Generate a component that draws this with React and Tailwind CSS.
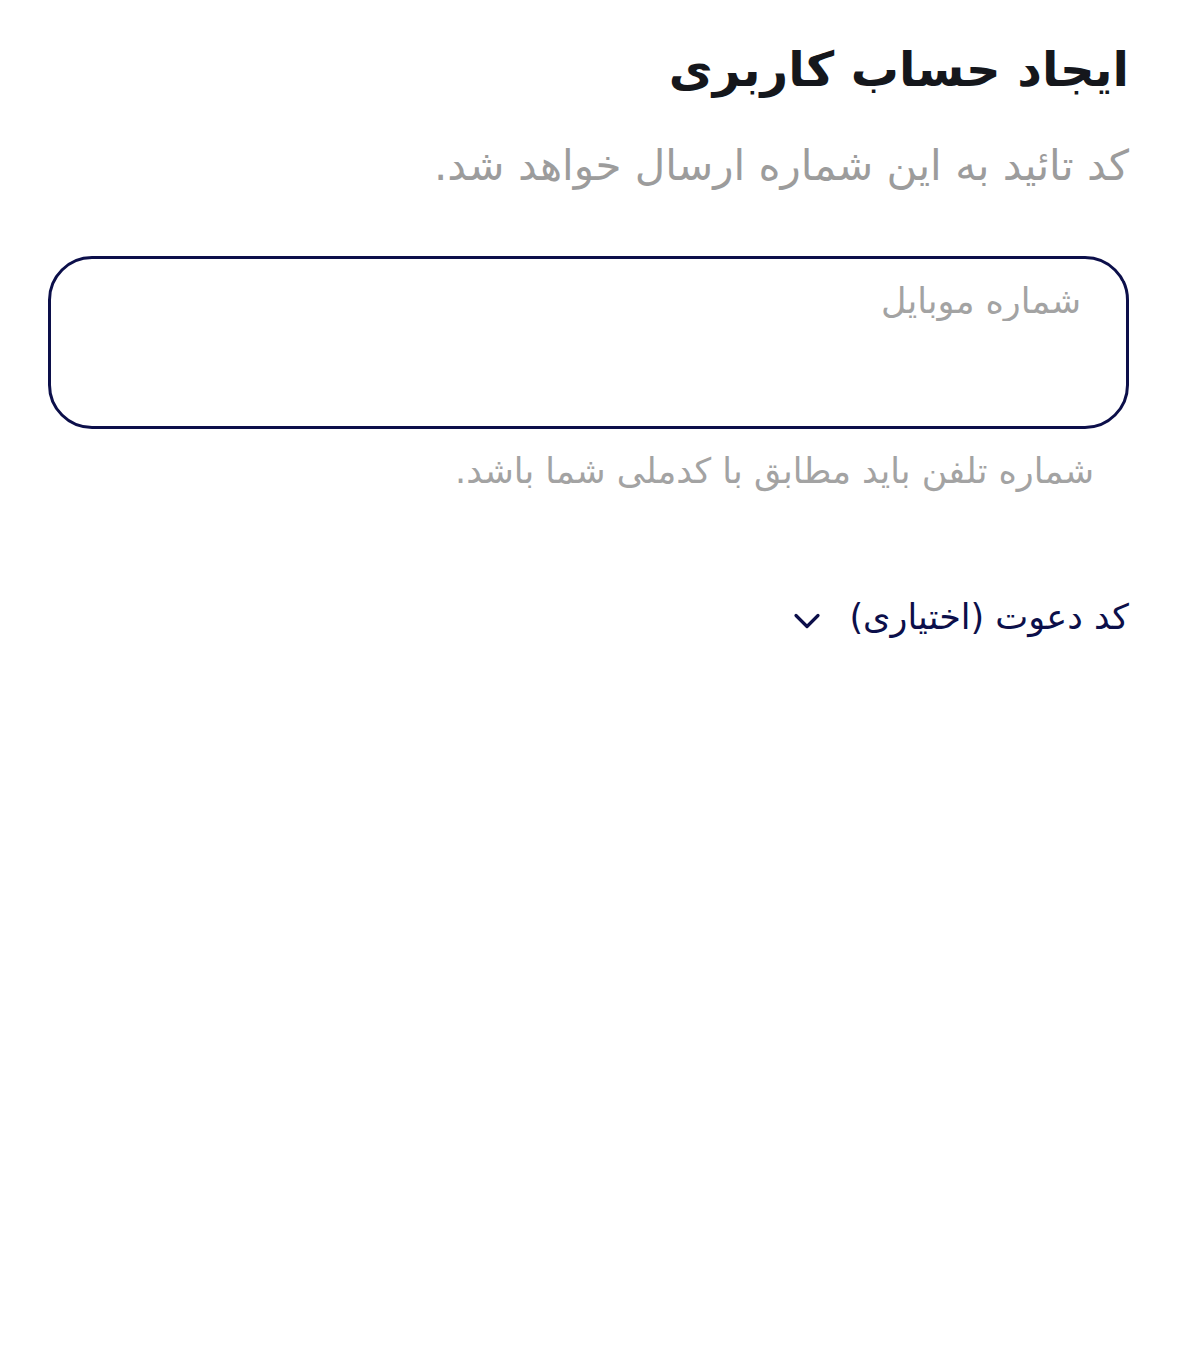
import { ChevronDown } from 'lucide-react'

const App = () => {
    return (
        <div dir="rtl" className="min-h-[1352px] bg-white px-12 pt-[36px]" style={{ fontFamily: '"DejaVu Sans", "Noto Sans", sans-serif' }}>
            <h1 className="text-[48px] font-bold leading-[66px] text-[#15171c]">ایجاد حساب کاربری</h1>
            <p className="mt-[36px] text-[42px] leading-[56px] text-[#9c9c9c]">کد تائید به این شماره ارسال خواهد شد.</p>

            <div className="mt-[62px] h-[173px] rounded-[44px] border-[3px] border-[#0c0f4a] px-[45px] pt-[18px]">
                <input
                    dir="rtl"
                    type="text"
                    placeholder="شماره موبایل"
                    className="w-full bg-transparent text-right text-[35px] leading-[48px] text-[#15171c] placeholder:text-[#a3a3a3] outline-none"
                />
            </div>

            <p className="mr-[35px] mt-[18px] text-[35px] leading-[48px] text-[#a3a3a3]">شماره تلفن باید مطابق با کدملی شما باشد.</p>

            <button className="mt-[96px] flex items-center gap-5 text-[#0c0f4a]">
                <span className="text-[35px] leading-[50px]">کد دعوت (اختیاری)</span>
                <ChevronDown className="mt-2 h-11 w-11" strokeWidth={1.75} />
            </button>
        </div>
    )
}

export default App
